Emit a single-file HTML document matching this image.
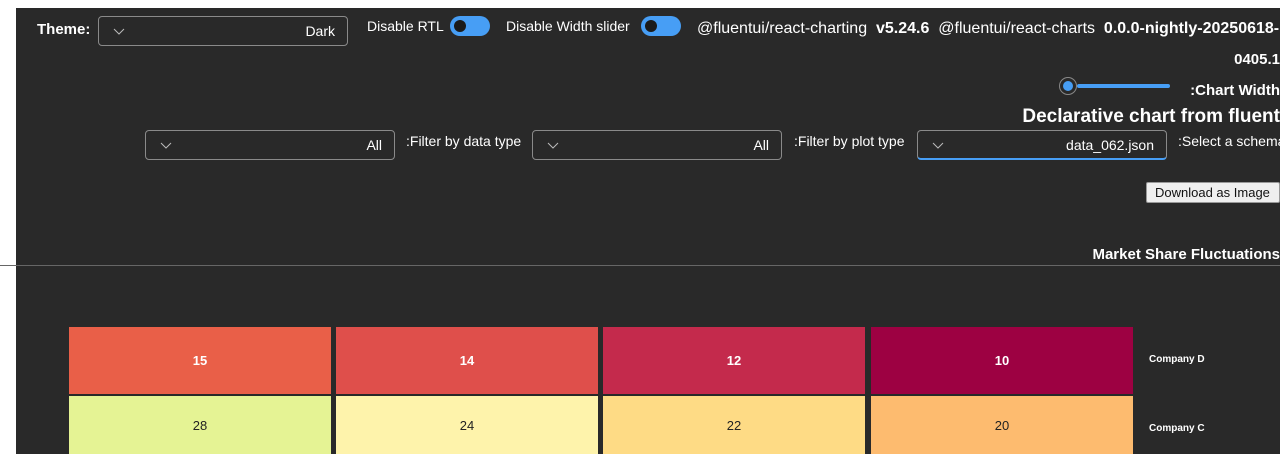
<!DOCTYPE html>
<html><head><style>
body{margin:0;width:1280px;height:454px;background:#fff;position:relative;overflow:hidden;font-family:"Liberation Sans",sans-serif;}
#d{position:absolute;left:16px;top:8px;width:1264px;height:446px;background:#292929;}
.t{position:absolute;color:#fff;white-space:nowrap;}
.dd{position:absolute;border:1px solid #8a8a8a;border-radius:4px;height:30px;box-sizing:border-box;background:#292929;}
.dd .v{position:absolute;right:12px;top:6px;color:#fff;font-size:14px;}
.dd svg{position:absolute;left:14px;top:11px;}
.tg{position:absolute;width:40px;height:20px;border-radius:10px;background:#479ef5;}
.tg i{position:absolute;left:4px;top:4px;width:12px;height:12px;border-radius:50%;background:#1b1b1b;}
.c{position:absolute;display:flex;align-items:center;justify-content:center;font-size:13px;font-weight:bold;color:#fff;}
</style></head><body>
<div id="d"></div>
<div class="t" style="left:37px;top:21px;font-size:15px;font-weight:bold">Theme:</div>
<div class="dd" style="left:98px;top:16px;width:250px"><svg width="12" height="7"><path d="M1 1L6 6L11 1" stroke="#bbb" fill="none"/></svg><span class="v">Dark</span></div>
<div class="t" style="left:367px;top:18px;font-size:14px">Disable RTL</div>
<div class="tg" style="left:450px;top:16px"><i></i></div>
<div class="t" style="left:506px;top:18px;font-size:14px">Disable Width slider</div>
<div class="tg" style="left:641px;top:16px"><i></i></div>
<div class="t" style="left:697px;top:20px;font-size:16px">@fluentui/react-charting&nbsp; <b>v5.24.6</b>&nbsp; @fluentui/react-charts&nbsp; <b>0.0.0-nightly-20250618-</b></div>
<div class="t" style="right:0;top:51px;font-size:15px;font-weight:bold">0405.1</div>
<div style="position:absolute;left:1059px;top:77px;width:18px;height:18px;border-radius:50%;border:1px solid #888;box-sizing:border-box;background:#292929"><div style="position:absolute;left:3px;top:3px;width:10px;height:10px;border-radius:50%;background:#479ef5"></div></div>
<div style="position:absolute;left:1077px;top:84px;width:93px;height:4px;border-radius:2px;background:#479ef5"></div>
<div class="t" style="right:0;top:82px;font-size:15px;font-weight:bold">:Chart Width</div>
<div class="t" style="right:0;top:106px;font-size:19px;font-weight:bold">Declarative chart from fluent</div>
<div class="dd" style="left:145px;top:130px;width:250px"><svg width="12" height="7"><path d="M1 1L6 6L11 1" stroke="#bbb" fill="none"/></svg><span class="v">All</span></div>
<div class="t" style="left:406px;top:133px;font-size:14px">:Filter by data type</div>
<div class="dd" style="left:532px;top:130px;width:250px"><svg width="12" height="7"><path d="M1 1L6 6L11 1" stroke="#bbb" fill="none"/></svg><span class="v">All</span></div>
<div class="t" style="left:794px;top:133px;font-size:14px">:Filter by plot type</div>
<div class="dd" style="left:917px;top:130px;width:250px;border-bottom:2px solid #479ef5"><svg width="12" height="7"><path d="M1 1L6 6L11 1" stroke="#bbb" fill="none"/></svg><span class="v">data_062.json</span></div>
<div class="t" style="left:1178px;top:133px;font-size:14px">:Select a schema</div>
<div style="position:absolute;left:1146px;top:182px;width:134px;height:21px;background:#efefef;border:1px solid #999;border-radius:2px;box-sizing:border-box;font-size:13px;color:#111;padding:2px 0 0 8px;white-space:nowrap">Download as Image</div>
<div class="t" style="right:0;top:246px;font-size:15px;font-weight:bold">Market Share Fluctuations</div>
<div style="position:absolute;left:0;top:265px;width:1280px;height:1px;background:#666"></div>
<div class="c" style="left:69px;top:327px;width:262px;height:67px;background:#e95f48">15</div>
<div class="c" style="left:336px;top:327px;width:262px;height:67px;background:#df4f4b">14</div>
<div class="c" style="left:603px;top:327px;width:262px;height:67px;background:#c42a4c">12</div>
<div class="c" style="left:871px;top:327px;width:262px;height:67px;background:#9d0142">10</div>
<div class="c" style="left:69px;top:396px;width:262px;height:58px;background:#e5f394;color:#222;font-weight:normal">28</div>
<div class="c" style="left:336px;top:396px;width:262px;height:58px;background:#fef3ab;color:#222;font-weight:normal">24</div>
<div class="c" style="left:603px;top:396px;width:262px;height:58px;background:#fedb85;color:#222;font-weight:normal">22</div>
<div class="c" style="left:871px;top:396px;width:262px;height:58px;background:#fdbb6f;color:#222;font-weight:normal">20</div>
<div class="t" style="left:1149px;top:354px;font-size:10px;font-weight:bold">Company D</div>
<div class="t" style="left:1149px;top:423px;font-size:10px;font-weight:bold">Company C</div>
</body></html>
